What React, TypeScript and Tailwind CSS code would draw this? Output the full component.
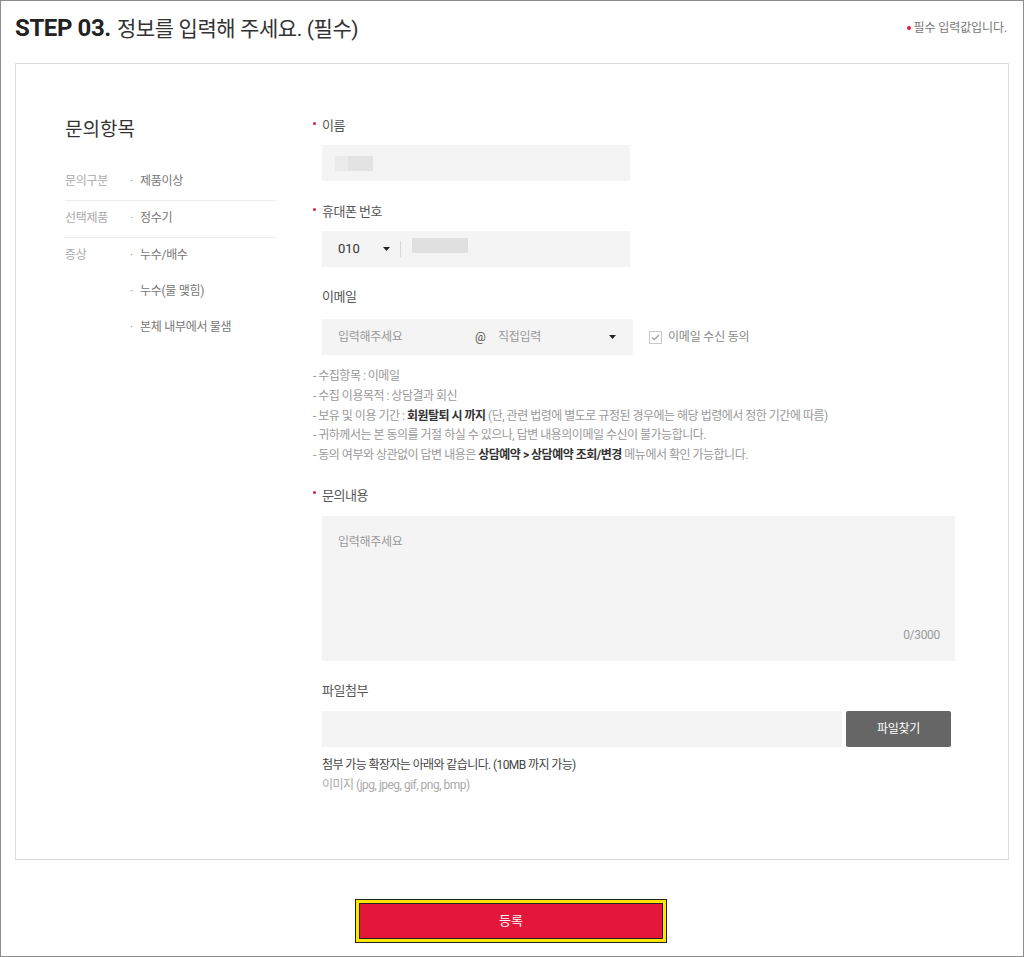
import React from 'react';

const font = { fontFamily: 'Roboto, "Noto Sans CJK KR", sans-serif' };

// 필수 표시 점
const Dot = () => <span className="mr-[6px] mt-[-6px] inline-block h-[3px] w-[3px] rounded-full bg-[#e4173a]" />;

const FieldLabel: React.FC<{ required?: boolean; children: React.ReactNode; className?: string }> = ({ required, children, className }) => (
  <div className={`flex h-[20px] items-center text-[13px] tracking-[-0.5px] text-[#555] ${required ? 'ml-[-9px]' : ''} ${className ?? ''}`}>
    {required && <Dot />}
    <span>{children}</span>
  </div>
);

const Caret = () => (
  <svg width="7" height="4" viewBox="0 0 7 4" className="shrink-0">
    <path d="M0 0h7L3.5 4z" fill="#222" />
  </svg>
);

const App: React.FC = () => {
  // 선택한 문의 항목
  const summary = [
    { label: '문의구분', values: ['제품이상'] },
    { label: '선택제품', values: ['정수기'] },
    { label: '증상', values: ['누수/배수', '누수(물 맺힘)', '본체 내부에서 물샘'] },
  ];

  return (
    <div className="h-[957px] w-[1024px] border border-[#8c8c8c] bg-white" style={font}>
      <div className="flex h-[52px] items-center justify-between pl-[14px] pr-[16px] pt-[2px]">
        <h1 className="flex items-baseline text-[#222]">
          <span className="text-[24px] font-bold tracking-[-0.4px]">STEP 03.</span>
          <span className="ml-[6px] text-[21px] tracking-[-0.4px] text-[#333]">정보를 입력해 주세요. (필수)</span>
        </h1>
        <p className="flex items-center text-[12px] tracking-[-0.1px] text-[#777]">
          <span className="mr-[3px] inline-block h-[4px] w-[4px] rounded-full bg-[#e4173a]" />
          필수 입력값입니다.
        </p>
      </div>

      <div className="mx-[14px] mt-[10px] flex h-[797px] border border-[#dcdcdc] pl-[49px] pt-[52px]">
        {/* 왼쪽: 문의항목 요약 */}
        <div className="w-[211px] shrink-0">
          <h2 className="h-[28px] text-[19px] leading-[28px] text-[#333]">문의항목</h2>
          <div className="mt-[27px]">
            {summary.map((row, i) => (
              <div
                key={row.label}
                className={`flex text-[12px] tracking-[-0.3px] ${i === 0 ? 'pt-0' : 'pt-[7px]'} ${i < summary.length - 1 ? 'border-b border-[#ececec] pb-[9px]' : ''}`}
              >
                <span className="w-[65px] shrink-0 leading-[20px] text-[#aaa]">{row.label}</span>
                <ul className="flex flex-col gap-[16px]">
                  {row.values.map((v) => (
                    <li key={v} className="flex leading-[20px] text-[#777]">
                      <span className="w-[10px] text-[#999]">·</span>
                      {v}
                    </li>
                  ))}
                </ul>
              </div>
            ))}
          </div>
        </div>

        {/* 오른쪽: 입력 폼 */}
        <div className="ml-[46px] w-[633px]">
          <FieldLabel required>이름</FieldLabel>
          <div className="mt-[9px] flex h-[36px] w-[308px] items-center bg-[#f4f4f4] pl-[13px]">
            <span className="h-[15px] w-[13px] bg-[#ebebeb]" />
            <span className="h-[15px] w-[25px] bg-[#e3e3e3]" />
          </div>

          <FieldLabel required className="mt-[21px]">휴대폰 번호</FieldLabel>
          <div className="mt-[9px] flex h-[36px] w-[308px] items-center bg-[#f4f4f4] pl-[16px]">
            <span className="w-[45px] text-[13px] text-[#333]">010</span>
            <Caret />
            <span className="ml-[10px] h-[16px] w-px bg-[#d9d9d9]" />
            <span className="mb-[8px] ml-[11px] h-[15px] w-[56px] bg-[#e0e0e0]" />
          </div>

          <FieldLabel className="mt-[20px]">이메일</FieldLabel>
          <div className="mt-[12px] flex items-center">
            <div className="flex h-[36px] w-[311px] items-center bg-[#f4f4f4] pl-[16px] pr-[17px] text-[12px] tracking-[-0.3px] text-[#999]">
              <span className="w-[137px]">입력해주세요</span>
              <span className="w-[23px] text-[#555]">@</span>
              <span className="flex-1">직접입력</span>
              <Caret />
            </div>
            <label className="ml-[16px] flex items-center text-[12px] tracking-[-0.2px] text-[#888]">
              <span className="mr-[6px] flex h-[13px] w-[13px] items-center justify-center border border-[#c8c8c8] bg-white">
                <svg width="9" height="7" viewBox="0 0 9 7">
                  <path d="M1 3.5l2.3 2.2L8 1" fill="none" stroke="#999" strokeWidth="1.2" />
                </svg>
              </span>
              이메일 수신 동의
            </label>
          </div>

          <ul className="ml-[-9px] mt-[12px] text-[12px] leading-[19.75px] tracking-[-0.5px] text-[#999]">
            <li>- 수집항목 : 이메일</li>
            <li>- 수집 이용목적 : 상담결과 회신</li>
            <li>
              - 보유 및 이용 기간 : <b className="text-[#333]">회원탈퇴 시 까지</b> (단, 관련 법령에 별도로 규정된 경우에는 해당 법령에서 정한 기간에 따름)
            </li>
            <li>- 귀하께서는 본 동의를 거절 하실 수 있으나, 답변 내용의이메일 수신이 불가능합니다.</li>
            <li>
              - 동의 여부와 상관없이 답변 내용은 <b className="text-[#333]">상담예약 &gt; 상담예약 조회/변경</b> 메뉴에서 확인 가능합니다.
            </li>
          </ul>

          <FieldLabel required className="mt-[20px]">문의내용</FieldLabel>
          <div className="mt-[10px] flex h-[145px] flex-col justify-between bg-[#f4f4f4] pb-[17px] pl-[16px] pr-[15px] pt-[17px] text-[12px] tracking-[-0.3px] text-[#999]">
            <span>입력해주세요</span>
            <span className="self-end">0/3000</span>
          </div>

          <FieldLabel className="mt-[20px]">파일첨부</FieldLabel>
          <div className="mt-[10px] flex h-[36px] w-[629px] gap-[4px]">
            <div className="flex-1 bg-[#f4f4f4]" />
            <button className="w-[105px] rounded-[2px] bg-[#666] text-[12px] tracking-[-0.3px] text-white">파일찾기</button>
          </div>
          <p className="mt-[8px] text-[12px] leading-[20px] tracking-[-0.6px] text-[#444]">첨부 가능 확장자는 아래와 같습니다. (10MB 까지 가능)</p>
          <p className="text-[12px] leading-[20px] tracking-[-0.5px] text-[#aaa]">이미지 (jpg, jpeg, gif, png, bmp)</p>
        </div>
      </div>

      <div className="mt-[39px] flex justify-center">
        <button className="ml-[-2px] h-[44px] w-[312px] border border-[#222] bg-[#ffe400] p-[3px]">
          <span className="flex h-full w-full items-center justify-center border border-[#222] bg-[#e4173a] text-[13px] text-white">
            등록
          </span>
        </button>
      </div>
    </div>
  );
};

export default App;
